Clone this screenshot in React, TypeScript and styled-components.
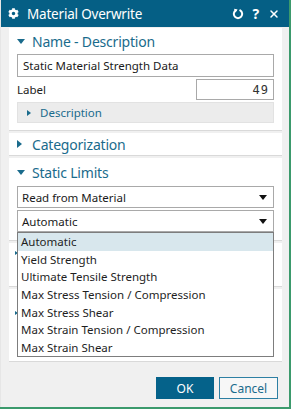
import styled, { createGlobalStyle } from "styled-components";
import { FaCog } from "react-icons/fa";
import { X } from "lucide-react";

const GlobalStyle = createGlobalStyle`
  html, body {
    margin: 0;
    padding: 0;
    background: #3b9a6c;
    font-family: "Noto Sans", "Open Sans", sans-serif;
  }
`;

const Frame = styled.div`
  position: relative;
  width: 289px;
  height: 407px;
  background: #f0f0f0;
  display: flex;
  flex-direction: column;
  box-sizing: border-box;
  border-left: 1px solid #e6e6e6;
`;

const TitleBar = styled.div`
  height: 27px;
  background: #055f85;
  color: #fff;
  display: flex;
  align-items: center;
  padding: 0 9px 0 7px;
  gap: 8px;
  font-size: 13.5px;
  letter-spacing: -0.2px;
`;

const Title = styled.div`
  flex: 1;
`;

const TitleTools = styled.div`
  display: flex;
  align-items: center;
  gap: 9px;
  font-weight: 700;
  font-size: 14px;
`;

const Body = styled.div`
  flex: 1;
  padding: 1px 7px 0 8px;
  display: flex;
  flex-direction: column;
  gap: 3px;
`;

const Panel = styled.div<{ $h?: number }>`
  background: #fff;
  box-shadow: 0 1px 0 #d9d9d9;
  padding-bottom: 7px;
  ${(p) => (p.$h ? `height: ${p.$h}px; box-sizing: border-box;` : "")}
`;

const PanelHeader = styled.div<{ $h?: number; $pad?: number }>`
  height: ${(p) => p.$h ?? 26}px;
  display: flex;
  align-items: center;
  gap: 7px;
  padding-left: ${(p) => p.$pad ?? 8}px;
  color: #1a6b8c;
  font-size: 14px;
  letter-spacing: -0.2px;
`;

const TriBox = styled.span<{ $w?: number }>`
  width: ${(p) => p.$w ?? 8}px;
  display: flex;
  align-items: center;
`;

const Tri = styled.span<{ $open?: boolean; $size?: number }>`
  width: 0;
  height: 0;
  ${(p) => {
    const s = p.$size ?? 4;
    return p.$open
      ? `border-left: ${s}px solid transparent; border-right: ${s}px solid transparent; border-top: ${s + 1}px solid #1a6b8c;`
      : `border-top: ${s}px solid transparent; border-bottom: ${s}px solid transparent; border-left: ${s + 1}px solid #1a6b8c;`;
  }}
`;

const Content = styled.div`
  padding: 0 8px;
  display: flex;
  flex-direction: column;
  gap: 2px;
`;

const TextBox = styled.div`
  height: 23px;
  border: 1px solid #a9a9a9;
  box-sizing: border-box;
  display: flex;
  align-items: center;
  padding-left: 5px;
  font-size: 11.5px;
  color: #1a1a1a;
`;

const Row = styled.div`
  display: flex;
  align-items: center;
  justify-content: space-between;
  font-size: 11.5px;
  color: #222;
`;

const NumberBox = styled.div`
  width: 78px;
  height: 21px;
  border: 1px solid #a9a9a9;
  box-sizing: border-box;
  display: flex;
  align-items: center;
  justify-content: flex-end;
  padding-right: 4px;
  font-family: "DejaVu Sans Mono", monospace;
  font-size: 12px;
  letter-spacing: 1px;
  color: #333;
`;

const SubHeader = styled.div`
  height: 21px;
  background: #ececec;
  border: 1px solid #e2e2e2;
  box-sizing: border-box;
  display: flex;
  align-items: center;
  gap: 9px;
  padding-left: 9px;
  color: #1a6b8c;
  font-size: 11.5px;
`;

const SelectBox = styled(TextBox)`
  height: 22px;
  justify-content: space-between;
  padding: 0 6px 0 4px;
`;

const Arrow = styled.span`
  width: 0;
  height: 0;
  border-left: 4px solid transparent;
  border-right: 4px solid transparent;
  border-top: 5px solid #111;
`;

const Footer = styled.div`
  height: 46px;
  display: flex;
  justify-content: flex-end;
  align-items: flex-start;
  gap: 5px;
  padding: 16px 11px 0 0;
  box-sizing: border-box;
`;

const Button = styled.button<{ $primary?: boolean }>`
  width: ${(p) => (p.$primary ? 58 : 59)}px;
  height: 22px;
  font-family: inherit;
  font-size: 12px;
  border: 1px solid ${(p) => (p.$primary ? "#05628a" : "#2d7fa3")};
  background: ${(p) => (p.$primary ? "#05628a" : "#f7f7f7")};
  color: ${(p) => (p.$primary ? "#fff" : "#1a6b8c")};
  padding: 0;
`;

const Menu = styled.div`
  position: absolute;
  left: 16px;
  top: 232px;
  width: 257px;
  height: 125px;
  border: 1px solid #7d7d7d;
  box-sizing: border-box;
  background: #fff;
  display: flex;
  flex-direction: column;
`;

const MenuItem = styled.div<{ $active?: boolean }>`
  height: 17.6px;
  display: flex;
  align-items: center;
  padding-left: 3px;
  font-size: 11.5px;
  color: #1e1e1e;
  background: ${(p) => (p.$active ? "#d8e7ed" : "transparent")};
`;

const options = [
  "Automatic",
  "Yield Strength",
  "Ultimate Tensile Strength",
  "Max Stress Tension / Compression",
  "Max Stress Shear",
  "Max Strain Tension / Compression",
  "Max Strain Shear",
];

function ResetIcon() {
  return (
    <svg width="12" height="12" viewBox="0 0 12 12" fill="none">
      <path
        d="M8.2 2.4 A4.2 4.2 0 1 1 3.8 2.4"
        stroke="#fff"
        strokeWidth="2"
        strokeLinecap="round"
      />
      <path d="M2 0.8 L5.6 1.6 L3.4 4.6 Z" fill="#fff" />
    </svg>
  );
}

export default function App() {
  return (
    <>
      <GlobalStyle />
      <Frame>
        <TitleBar>
          <FaCog size={11} />
          <Title>Material Overwrite</Title>
          <TitleTools>
            <ResetIcon />
            <span>?</span>
            <X size={12} strokeWidth={3} />
          </TitleTools>
        </TitleBar>
        <Body>
          <Panel>
            <PanelHeader>
              <TriBox>
                <Tri $open />
              </TriBox>
              Name - Description
            </PanelHeader>
            <Content>
              <TextBox>Static Material Strength Data</TextBox>
              <Row>
                Label
                <NumberBox>49</NumberBox>
              </Row>
              <SubHeader>
                <Tri $size={3} />
                Description
              </SubHeader>
            </Content>
          </Panel>
          <Panel $h={22}>
            <PanelHeader $h={22}>
              <TriBox>
                <Tri />
              </TriBox>
              Categorization
            </PanelHeader>
          </Panel>
          <Panel $h={82}>
            <PanelHeader $h={28}>
              <TriBox>
                <Tri $open />
              </TriBox>
              Static Limits
            </PanelHeader>
            <Content>
              <SelectBox>
                Read from Material
                <Arrow />
              </SelectBox>
              <SelectBox>
                Automatic
                <Arrow />
              </SelectBox>
            </Content>
          </Panel>
          <Panel $h={43}>
            <PanelHeader $h={20} $pad={6}>
              <TriBox $w={4}>
                <Tri $size={2} />
              </TriBox>
            </PanelHeader>
          </Panel>
          <Panel $h={72}>
            <PanelHeader $h={48} $pad={6}>
              <TriBox $w={4}>
                <Tri $size={2} />
              </TriBox>
            </PanelHeader>
          </Panel>
        </Body>
        <Footer>
          <Button $primary>OK</Button>
          <Button>Cancel</Button>
        </Footer>
        <Menu>
          {options.map((o, i) => (
            <MenuItem key={o} $active={i === 0}>
              {o}
            </MenuItem>
          ))}
        </Menu>
      </Frame>
    </>
  );
}
